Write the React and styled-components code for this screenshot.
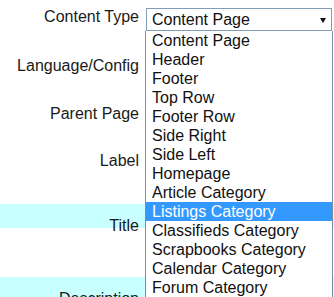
import React from "react";
import styled, { createGlobalStyle } from "styled-components";

const GlobalStyle = createGlobalStyle`
  html, body {
    margin: 0;
    padding: 0;
    background: #ffffff;
    overflow: hidden;
  }
  body {
    font-family: "Liberation Sans", Arial, sans-serif;
    font-size: 16px;
    color: #1a1a1a;
  }
`;

const Form = styled.div`
  display: flex;
  flex-direction: column;
  width: 334px;
  height: 297px;
  overflow: hidden;
`;

const Row = styled.div`
  display: grid;
  grid-template-columns: 139px 1fr;
  column-gap: 7px;
  height: ${(p) => p.$h}px;
  flex: none;
  background: ${(p) =>
    p.$band
      ? "linear-gradient(to bottom, #c8ffff 0 24px, transparent 24px)"
      : "none"};
`;

const Label = styled.div`
  text-align: right;
  line-height: 19px;
  padding-top: ${(p) => p.$top}px;
  white-space: nowrap;
`;

const Field = styled.div`
  position: relative;
  padding-top: 8px;
`;

const SelectBox = styled.div`
  position: relative;
  width: 186px;
  height: 23px;
  box-sizing: border-box;
  border: 1px solid #7f9db9;
  background: #fff;
  padding-left: 5px;
  line-height: 21px;
  color: #111;
`;

const Arrow = styled.svg`
  position: absolute;
  right: 5px;
  top: 9px;
`;

const List = styled.ul`
  position: absolute;
  top: 31px;
  left: -1px;
  width: 188px;
  margin: 0;
  padding: 0;
  list-style: none;
  box-sizing: border-box;
  border: 1px solid #7a8ea8;
  border-top: none;
  background: #fff;
  z-index: 10;
`;

const Option = styled.li`
  height: 19px;
  line-height: 19px;
  padding-left: 6px;
  white-space: nowrap;
  color: ${(p) => (p.$active ? "#ffffff" : "#111111")};
  background: ${(p) => (p.$active ? "#3399ff" : "transparent")};
`;

const options = [
  "Content Page",
  "Header",
  "Footer",
  "Top Row",
  "Footer Row",
  "Side Right",
  "Side Left",
  "Homepage",
  "Article Category",
  "Listings Category",
  "Classifieds Category",
  "Scrapbooks Category",
  "Calendar Category",
  "Forum Category",
];

export default function App() {
  return (
    <>
      <GlobalStyle />
      <Form>
        <Row $h={48}>
          <Label $top={7}>Content Type</Label>
          <Field>
            <SelectBox>
              Content Page
              <Arrow width="6" height="5" viewBox="0 0 6 5">
                <polygon points="0,0 6,0 3,5" fill="#111" />
              </Arrow>
            </SelectBox>
            <List>
              {options.map((o) => (
                <Option key={o} $active={o === "Listings Category"}>
                  {o}
                </Option>
              ))}
            </List>
          </Field>
        </Row>
        <Row $h={48}>
          <Label $top={8}>Language/Config</Label>
        </Row>
        <Row $h={48}>
          <Label $top={8}>Parent Page</Label>
        </Row>
        <Row $h={60}>
          <Label $top={7}>Label</Label>
        </Row>
        <Row $h={73} $band>
          <Label $top={12}>Title</Label>
        </Row>
        <Row $h={60} $band>
          <Label $top={12}>Description</Label>
        </Row>
      </Form>
    </>
  );
}
